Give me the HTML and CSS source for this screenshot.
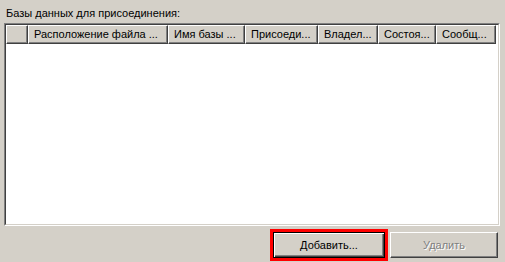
FILE: index.html
```html
<!DOCTYPE html>
<html lang="ru">
  <head>
    <meta charset="UTF-8">
    <title>Базы данных для присоединения</title>
    <link rel="stylesheet" href="styles.css">
  </head>
  <body>
    <div class="panel">
      <div class="caption">Базы данных для присоединения:</div>

      <div class="listview">
        <div class="header">
          <div class="col col-check"></div>
          <div class="col col-path">Расположение файла ...</div>
          <div class="col col-name">Имя базы ...</div>
          <div class="col col-attach">Присоеди...</div>
          <div class="col col-owner">Владел...</div>
          <div class="col col-state">Состоя...</div>
          <div class="col col-msg">Сообщ...</div>
        </div>
        <div class="rows"></div>
      </div>

      <div class="actions">
        <span class="highlight">
          <button class="btn btn-default">Добавить...</button>
        </span>
        <button class="btn" disabled>Удалить</button>
      </div>
    </div>
  </body>
</html>
```

FILE: styles.css
```css
body {
  margin: 0;
  background-color: #d4d0c8;
  font-family: Tahoma, "Liberation Sans", "DejaVu Sans", sans-serif;
  font-size: 11px;
  color: #000;
}

.panel {
  width: 505px;
  height: 262px;
  padding: 7px 5px 0 4px;
  box-sizing: border-box;
  display: flex;
  flex-direction: column;
}

.caption {
  padding-left: 2px;
  height: 16px;
  line-height: 13px;
}

/* sunken list box */
.listview {
  height: 203px;
  box-sizing: border-box;
  border-top: 1px solid #808080;
  border-left: 1px solid #808080;
  border-right: 1px solid #fff;
  border-bottom: 1px solid #fff;
  display: flex;
  flex-direction: column;
}

.listview > .header,
.listview > .rows {
  border-top: 1px solid #404040;
  border-left: 1px solid #404040;
}

.listview > .rows {
  border-top: none;
  flex: 1;
  background-color: #fff;
  border-right: 1px solid #d4d0c8;
  border-bottom: 1px solid #d4d0c8;
}

.header {
  display: flex;
  background-color: #fff;
  border-right: 1px solid #d4d0c8;
}

.col {
  height: 19px;
  box-sizing: border-box;
  background-color: #d4d0c8;
  border-top: 1px solid #fff;
  border-left: 1px solid #fff;
  border-right: 1px solid #404040;
  border-bottom: 1px solid #404040;
  box-shadow: inset -1px -1px 0 #808080;
  padding: 0 0 0 5px;
  line-height: 16px;
  white-space: nowrap;
  overflow: hidden;
}

.col-check { width: 22px; }
.col-path { width: 140px; }
.col-name { width: 77px; }
.col-attach { width: 73px; }
.col-owner { width: 60px; }
.col-state { width: 58px; }
.col-msg { width: 60px; }

.actions {
  display: flex;
  justify-content: flex-end;
  align-items: center;
  gap: 2px;
  margin-top: 3px;
  padding-right: 2px;
}

.highlight {
  border: 3px solid #ff0000;
  display: flex;
}

.btn {
  font: inherit;
  width: 108px;
  height: 26px;
  padding: 0;
  background-color: #d4d0c8;
  border-top: 1px solid #fff;
  border-left: 1px solid #fff;
  border-right: 1px solid #404040;
  border-bottom: 1px solid #404040;
  box-shadow: inset -1px -1px 0 #808080;
  color: #000;
}

.btn-default {
  width: 112px;
  border: 1px solid #000;
  box-shadow: inset 1px 1px 0 #fff, inset -1px -1px 0 #404040, inset -2px -2px 0 #808080;
}

.btn:disabled {
  color: #808080;
  text-shadow: 1px 1px 0 #fff;
}
```
